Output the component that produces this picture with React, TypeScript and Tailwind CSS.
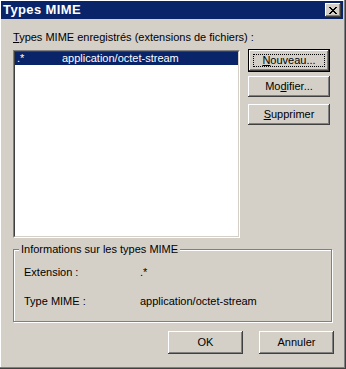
import React from 'react';

const font = { fontFamily: '"Liberation Sans", Arial, sans-serif' };

const raised =
  'bg-[#d4d0c8] shadow-[inset_-1px_-1px_0_#404040,inset_1px_1px_0_#ffffff,inset_-2px_-2px_0_#808080,inset_2px_2px_0_#d4d0c8]';

const Button = ({
  children,
  isDefault = false,
  focused = false,
  className = '',
}: {
  children: React.ReactNode;
  isDefault?: boolean;
  focused?: boolean;
  className?: string;
}) => {
  const inner = (
    <div className={`${raised} flex h-full w-full items-center justify-center p-[4px]`}>
      <span
        className={`flex h-full w-full items-center justify-center border ${
          focused ? 'border-dotted border-black' : 'border-transparent'
        }`}
      >
        {children}
      </span>
    </div>
  );
  if (isDefault) {
    return <div className={`border border-black ${className}`}>{inner}</div>;
  }
  return <div className={className}>{inner}</div>;
};

export default function App() {
  return (
    <div
      className="w-[346px] h-[369px] bg-[#404040] pr-[1px] pb-[1px] text-[11px] leading-[13px] text-black select-none"
      style={font}
    >
      <div className="w-[345px] h-[368px] bg-[#808080] pr-[1px] pb-[1px]">
        <div className="flex h-[367px] w-[344px] flex-col bg-[#d4d0c8] border-t border-l border-white pr-[1px]">
          {/* title bar */}
          <div className="flex h-[18px] w-[342px] items-center justify-between bg-[#0a246a] pl-[2px] pr-[2px]">
            <span className="font-bold text-white text-[13px] leading-[16px] tracking-[0.4px]">Types MIME</span>
            <div className={`${raised} flex h-[14px] w-[16px] items-center justify-center`}>
              <svg width="8" height="7" viewBox="0 0 8 7" shapeRendering="crispEdges">
                <path
                  d="M0 0h2v1h1v1h2V1h1V0h2v1h-1v1h-1v1h-1v1h1v1h1v1h1v1H6V6H5V5H3v1H2v1H0V6h1V5h1V4h1V3H2V2H1V1H0z"
                  fill="#000"
                />
              </svg>
            </div>
          </div>

          {/* content */}
          <div className="flex flex-1 flex-col pl-[12px] pt-[12px]">
            <div>
              <span className="underline">T</span>ypes MIME enregistrés (extensions de fichiers) :
            </div>

            <div className="mt-[6px] flex">
              <div className="h-[188px] w-[227px] border border-t-[#808080] border-l-[#808080] border-b-white border-r-white">
                <div className="h-full w-full border border-t-[#404040] border-l-[#404040] border-b-[#d4d0c8] border-r-[#d4d0c8] bg-white">
                  <div className="flex h-[13px] items-center bg-[#0a246a] text-white">
                    <span className="w-[47px] pl-[2px]">.*</span>
                    <span>application/octet-stream</span>
                  </div>
                </div>
              </div>

              <div className="ml-[8px] flex flex-col">
                <Button isDefault focused className="mt-[-1px] h-[23px] w-[82px]">
                  <span>
                    <span className="underline">N</span>ouveau...
                  </span>
                </Button>
                <Button className="mt-[4px] h-[21px] w-[82px]">
                  <span>
                    Mo<span className="underline">d</span>ifier...
                  </span>
                </Button>
                <Button className="mt-[7px] h-[21px] w-[82px]">
                  <span>
                    <span className="underline">S</span>upprimer
                  </span>
                </Button>
              </div>
            </div>

            <fieldset className="mt-[5px] h-[79px] w-[319px] border border-[#808080] shadow-[1px_1px_0_#ffffff,inset_1px_1px_0_#ffffff]">
              <legend className="ml-[5px] bg-[#d4d0c8] px-[2px]">Informations sur les types MIME</legend>
              <div className="mt-[10px] flex pl-[10px]">
                <span className="w-[116px]">Extension :</span>
                <span>.*</span>
              </div>
              <div className="mt-[16px] flex pl-[10px]">
                <span className="w-[116px]">Type MIME :</span>
                <span>application/octet-stream</span>
              </div>
            </fieldset>

            <div className="mt-[9px] flex justify-end gap-[16px] pr-[9px]">
              <Button className="h-[23px] w-[75px]">OK</Button>
              <Button className="h-[23px] w-[75px]">Annuler</Button>
            </div>
          </div>
        </div>
      </div>
    </div>
  );
}
